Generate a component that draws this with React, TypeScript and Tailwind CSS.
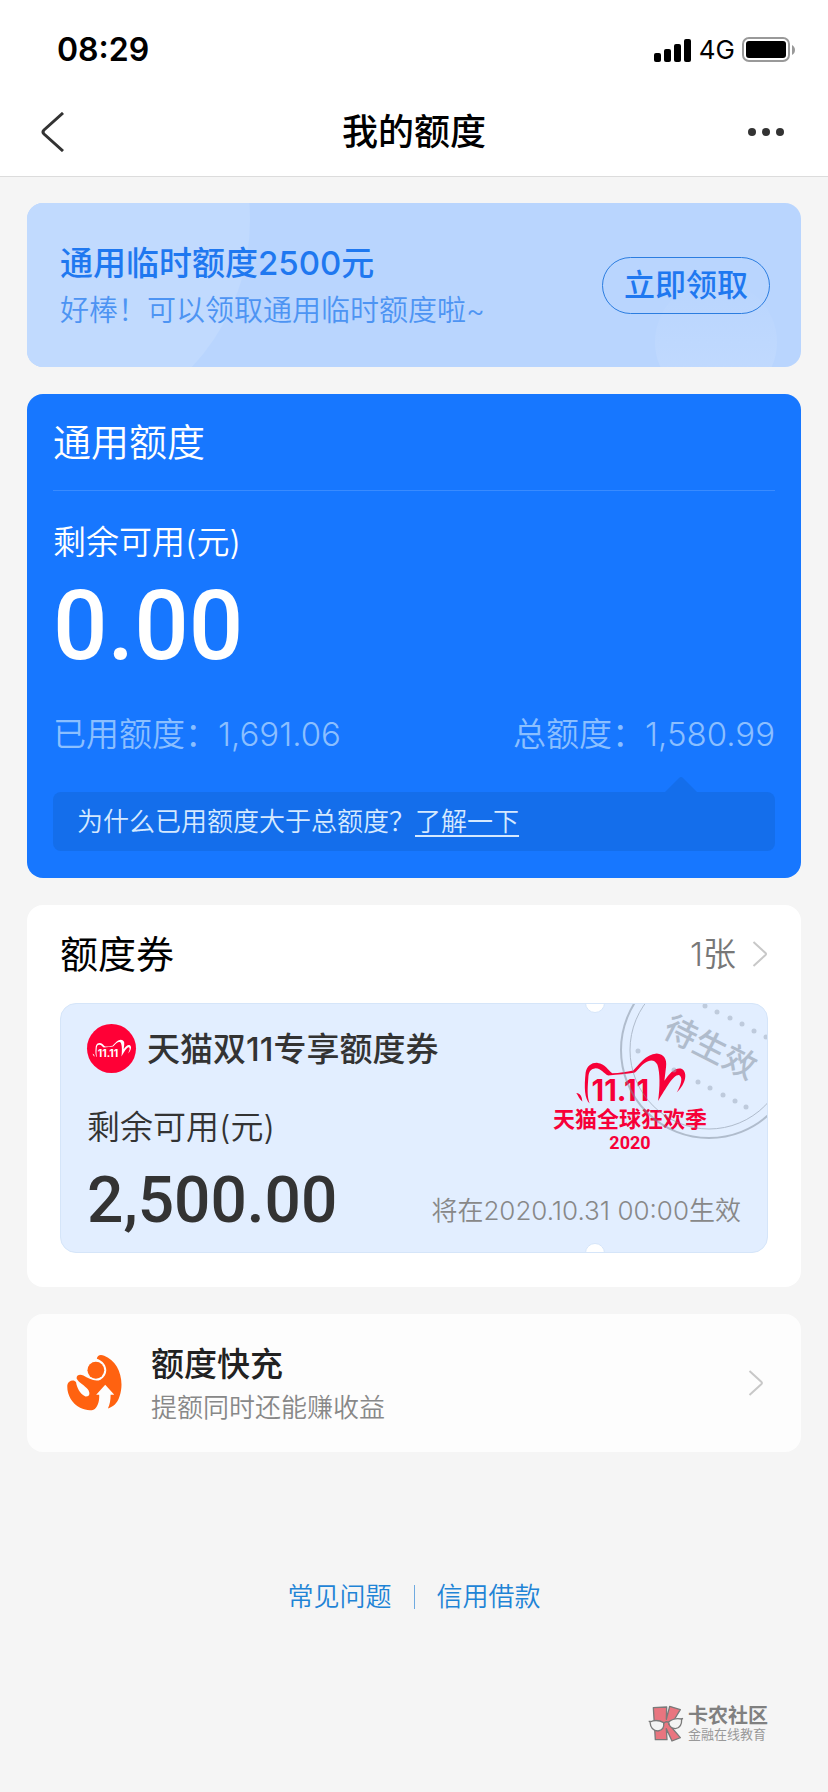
import React from 'react';

const StatusBar: React.FC = () => (
  <div className="flex items-center justify-between h-[88px] pt-3 pl-[57px] pr-8 text-black">
    <span className="text-[32px] leading-10 font-semibold">08:29</span>
    <div className="flex items-center gap-[7px]">
      <svg width="38" height="24" viewBox="0 0 38 24" fill="currentColor" aria-hidden="true">
        <rect x="0" y="15" width="7" height="9" rx="2" />
        <rect x="10" y="11" width="7" height="13" rx="2" />
        <rect x="20" y="6" width="7" height="18" rx="2" />
        <rect x="30" y="1" width="7" height="23" rx="2" />
      </svg>
      <span className="text-[26px] leading-8">4G</span>
      <svg width="54" height="26" viewBox="0 0 54 26" aria-hidden="true">
        <rect x="1" y="1" width="46" height="23" rx="6" fill="none" stroke="#999" strokeWidth="2" />
        <rect x="4" y="4" width="40" height="17" rx="3" fill="#000" />
        <path d="M50 8c4 2 4 8 0 10z" fill="#999" />
      </svg>
    </div>
  </div>
);

const Chevron: React.FC = () => (
  <svg width="16" height="28" viewBox="0 0 16 28" fill="none" stroke="#c8c8c8" strokeWidth="2" aria-hidden="true">
    <path d="M1.500 2 13.500 13q1 1 0 2L1.500 26" />
  </svg>
);

// Cat-head outline shared by the round badge and the festival logo
const CatMark: React.FC<{ className: string }> = ({ className }) => (
  <svg viewBox="110 184 340 158" className={className} fill="currentColor" overflow="visible" aria-hidden="true">
    <path d="M154 338C139 325 137 290 142 245 146 225 160 215 178 216 200 218 210 238 222 247 245 247 265 243 285 239 302 224 322 190 356 188 378 190 387 205 384 228L379 270C395 245 412 230 428 233 450 240 446 278 416 305 428 285 436 260 424 253 406 250 386 290 360 331 366 290 366 245 358 222 350 205 335 206 320 216 305 226 297 242 288 246 265 250 240 251 210 254 196 248 190 233 172 232 155 234 151 245 150 262 147 300 147 320 154 338Z" />
    <path d="M114 307C126 308 131 318 132 332 124 327 120 316 114 307Z" />
    <text x="160" y="332" fontSize="88" fontWeight="700" fontFamily="Inter, sans-serif">11.11</text>
  </svg>
);

const Stamp: React.FC = () => (
  <svg width="148" height="136" viewBox="620 1003 148 136" className="absolute right-0 top-0 opacity-50" fill="none" stroke="#7f8b9b" aria-label="待生效">
    <circle cx="710" cy="1049" r="88" strokeWidth="2" />
    <circle cx="710" cy="1049" r="79" strokeWidth="1" />
    <g fill="#9ba8ba" stroke="none">
      {[[706, 1005], [718, 1011], [731, 1017], [743, 1023], [755, 1030], [767, 1036],
        [639, 1050], [675, 1069], [699, 1081], [711, 1087], [724, 1094], [736, 1100], [747, 1106]].map(([x, y]) => (
        <circle key={x + '-' + y} cx={x} cy={y} r="2.500" />
      ))}
    </g>
    <text
      x="711"
      y="1058"
      transform="rotate(27 711 1047)"
      textAnchor="middle"
      fontSize="33"
      fontWeight="500"
      fill="#7f8b9b"
      stroke="none"
    >
      待生效
    </text>
  </svg>
);

export default function App() {
  return (
    <div className="min-h-screen bg-[#f5f5f5] font-['Inter','Noto_Sans_CJK_SC',sans-serif] text-[#333]">
      <header className="bg-white border-b border-[#dcdcdc]">
        <StatusBar />
        <div className="grid grid-cols-3 items-center h-[88px] px-10">
          <button type="button" aria-label="返回" className="justify-self-start">
            <svg width="26" height="40" viewBox="0 0 26 40" fill="none" stroke="#333" strokeWidth="3" aria-hidden="true">
              <path d="M23 1 4 18q-2 2 0 4L23 39" />
            </svg>
          </button>
          <h1 className="text-center text-[36px] leading-12 font-medium text-black">我的额度</h1>
          <button type="button" aria-label="更多" className="justify-self-end mr-1">
            <svg width="36" height="10" viewBox="0 0 36 10" fill="#333" aria-hidden="true">
              <circle cx="4" cy="5" r="4" />
              <circle cx="18" cy="5" r="4" />
              <circle cx="32" cy="5" r="4" />
            </svg>
          </button>
        </div>
      </header>

      <main className="flex flex-col gap-[27px] px-[27px] pt-[26px]">
        {/* Temporary quota banner */}
        <section className="relative overflow-hidden flex items-center justify-between h-[164px] rounded-2xl bg-[#b9d5fe] pl-[33px] pr-[31px]">
          <div className="absolute -left-[207px] -top-[198px] size-[430px] rounded-full bg-[#c1dafe]" />
          <div className="absolute right-6 -bottom-9 size-[122px] rounded-full bg-linear-to-b from-[#b9d5fe] to-[#c3dbfe]" />
          <div className="relative pt-1">
            <h2 className="text-[33px] leading-12 font-medium text-[#1f78f0]">通用临时额度2500元</h2>
            <p className="text-[29px] leading-12 font-[350] text-[#4d94f3]">好棒！可以领取通用临时额度啦~</p>
          </div>
          <button type="button" className="relative w-[168px] h-[57px] rounded-full border border-[#2b7de0] text-[31px] font-medium text-[#1f78f0]">
            立即领取
          </button>
        </section>

        {/* General quota */}
        <section className="rounded-2xl bg-[#1777ff] px-[26px] pb-[27px] text-white">
          <h2 className="h-[97px] border-b border-white/15 text-[38px] leading-[97px] font-[350]">通用额度</h2>
          <p className="pt-[27px] text-[33px] leading-12 font-[350]">剩余可用(元)</p>
          <p className="pt-2 font-['Roboto',sans-serif] text-[96px] leading-[104px] font-medium">0.00</p>
          <div className="flex justify-between pt-8 text-[33px] leading-12 font-[350] text-[#8bbfff]">
            <span>已用额度：1,691.06</span>
            <span>总额度：1,580.99</span>
          </div>
          <div className="relative mt-[34px] rounded-lg bg-[#146eeb] px-6 text-[26px] leading-[59px] font-[350] text-[#d5e9ff]">
            <svg width="32" height="16" viewBox="0 0 32 16" className="absolute right-[78px] -top-4" aria-hidden="true">
              <path d="M0 16 14 2q2-2 4 0l14 14z" fill="#146eeb" />
            </svg>
            <span>为什么已用额度大于总额度？</span>
            <a href="#why" className="underline underline-offset-4 decoration-2">了解一下</a>
          </div>
        </section>

        {/* Quota coupons */}
        <section className="rounded-2xl bg-white px-[33px] pb-[34px]">
          <div className="flex items-center justify-between h-[98px]">
            <h2 className="text-[38px] leading-12 font-normal text-black">额度券</h2>
            <a href="#coupons" className="flex items-center gap-4 text-[33px] leading-12 font-[350] text-[#777]">
              1张
              <Chevron />
            </a>
          </div>
          <div className="relative overflow-hidden h-[250px] rounded-2xl border border-[#d5e5f9] bg-[#e2eeff] px-[26px] pt-5">
            <div className="absolute right-[162px] -top-[11px] size-5 rounded-full border border-[#d5e5f9] bg-white" />
            <div className="absolute right-[162px] -bottom-[11px] size-5 rounded-full border border-[#d5e5f9] bg-white" />
            <div className="absolute right-[60px] top-[48px] flex flex-col items-center font-bold text-[#f70038]">
              <CatMark className="w-[113px] h-[53px] ml-1" />
              <span className="text-[22px] leading-7">天猫全球狂欢季</span>
              <span className="font-['Roboto',sans-serif] text-[18px] leading-5">2020</span>
            </div>
            <Stamp />
            <div className="flex items-center gap-[11px]">
              <span className="flex items-center justify-center size-[49px] rounded-full bg-[#ff0036] text-white">
                <CatMark className="w-[40px] h-[19px]" />
              </span>
              <h3 className="text-[33px] leading-12 font-medium">天猫双11专享额度券</h3>
            </div>
            <p className="pt-[30px] text-[33px] leading-12 font-[350]">剩余可用(元)</p>
            <div className="flex items-center justify-between pt-[14px]">
              <p className="font-['Roboto',sans-serif] text-[64px] leading-[72px] font-medium">2,500.00</p>
              <p className="pt-5 text-[26px] leading-8 font-[350] text-[#888]">将在2020.10.31 00:00生效</p>
            </div>
          </div>
        </section>

        {/* Quick top-up */}
        <a href="#boost" className="flex items-center h-[138px] rounded-2xl bg-[#fdfdfd] pl-10 pr-[37px]">
          <svg width="55" height="58" viewBox="52 75 164 170" className="shrink-0" fill="#ff6210" aria-hidden="true">
            <path d="M141 88C142 77 152 74 163 79 205 95 225 150 209 199 202 222 190 231 174 236 180 223 182 210 182 195L193 195 166 165 139 195 148 195C149 215 143 233 131 240 119 244 105 240 91 234 66 220 51 194 53 166 55 153 73 148 79 158 82 175 90 193 107 200 120 201 122 190 114 179 106 167 86 158 81 147 79 136 91 132 101 138 116 148 137 157 152 150 170 140 174 119 163 103 157 95 149 91 141 88Z" />
            <circle cx="138" cy="122" r="25" />
          </svg>
          <div className="flex-1 pt-[2px] pl-[29px]">
            <h2 className="text-[33px] leading-12 font-medium text-[#222]">额度快充</h2>
            <p className="text-[26px] leading-10 font-[350] text-[#888]">提额同时还能赚收益</p>
          </div>
          <Chevron />
        </a>
      </main>

      <footer>
        <nav className="flex items-center justify-center gap-[22px] pt-[127px] text-[26px] leading-9 font-[350] text-[#1f84d6]">
          <a href="#faq">常见问题</a>
          <span className="w-px h-6 bg-[#6faae0]" />
          <a href="#loan">信用借款</a>
        </nav>
        <div className="flex items-center justify-end pt-[90px] pr-[60px] text-[#808080]">
          <svg width="36" height="38" viewBox="22 28 108 112" stroke="#7a7a7a" strokeWidth="4" strokeLinejoin="round" aria-hidden="true">
            <path d="M38 35 78 33 77 70 87 31 119 41 100 72 84 84 119 125 94 135 77 98 79 131 44 131Z" fill="#e9757f" />
            <path d="M28 78Q48 68 69 80 72 102 52 105 30 104 28 78ZM84 78Q100 64 123 69 124 96 104 98 86 97 84 78Z" fill="#f4f4f4" />
            <path d="M69 82Q76 74 84 79M24 76h6M121 70l6-3" fill="none" />
          </svg>
          <div className="pl-1">
            <p className="text-[20px] leading-5 font-bold">卡农社区</p>
            <p className="text-[13px] leading-4 text-[#999]">金融在线教育</p>
          </div>
        </div>
      </footer>
    </div>
  );
}
